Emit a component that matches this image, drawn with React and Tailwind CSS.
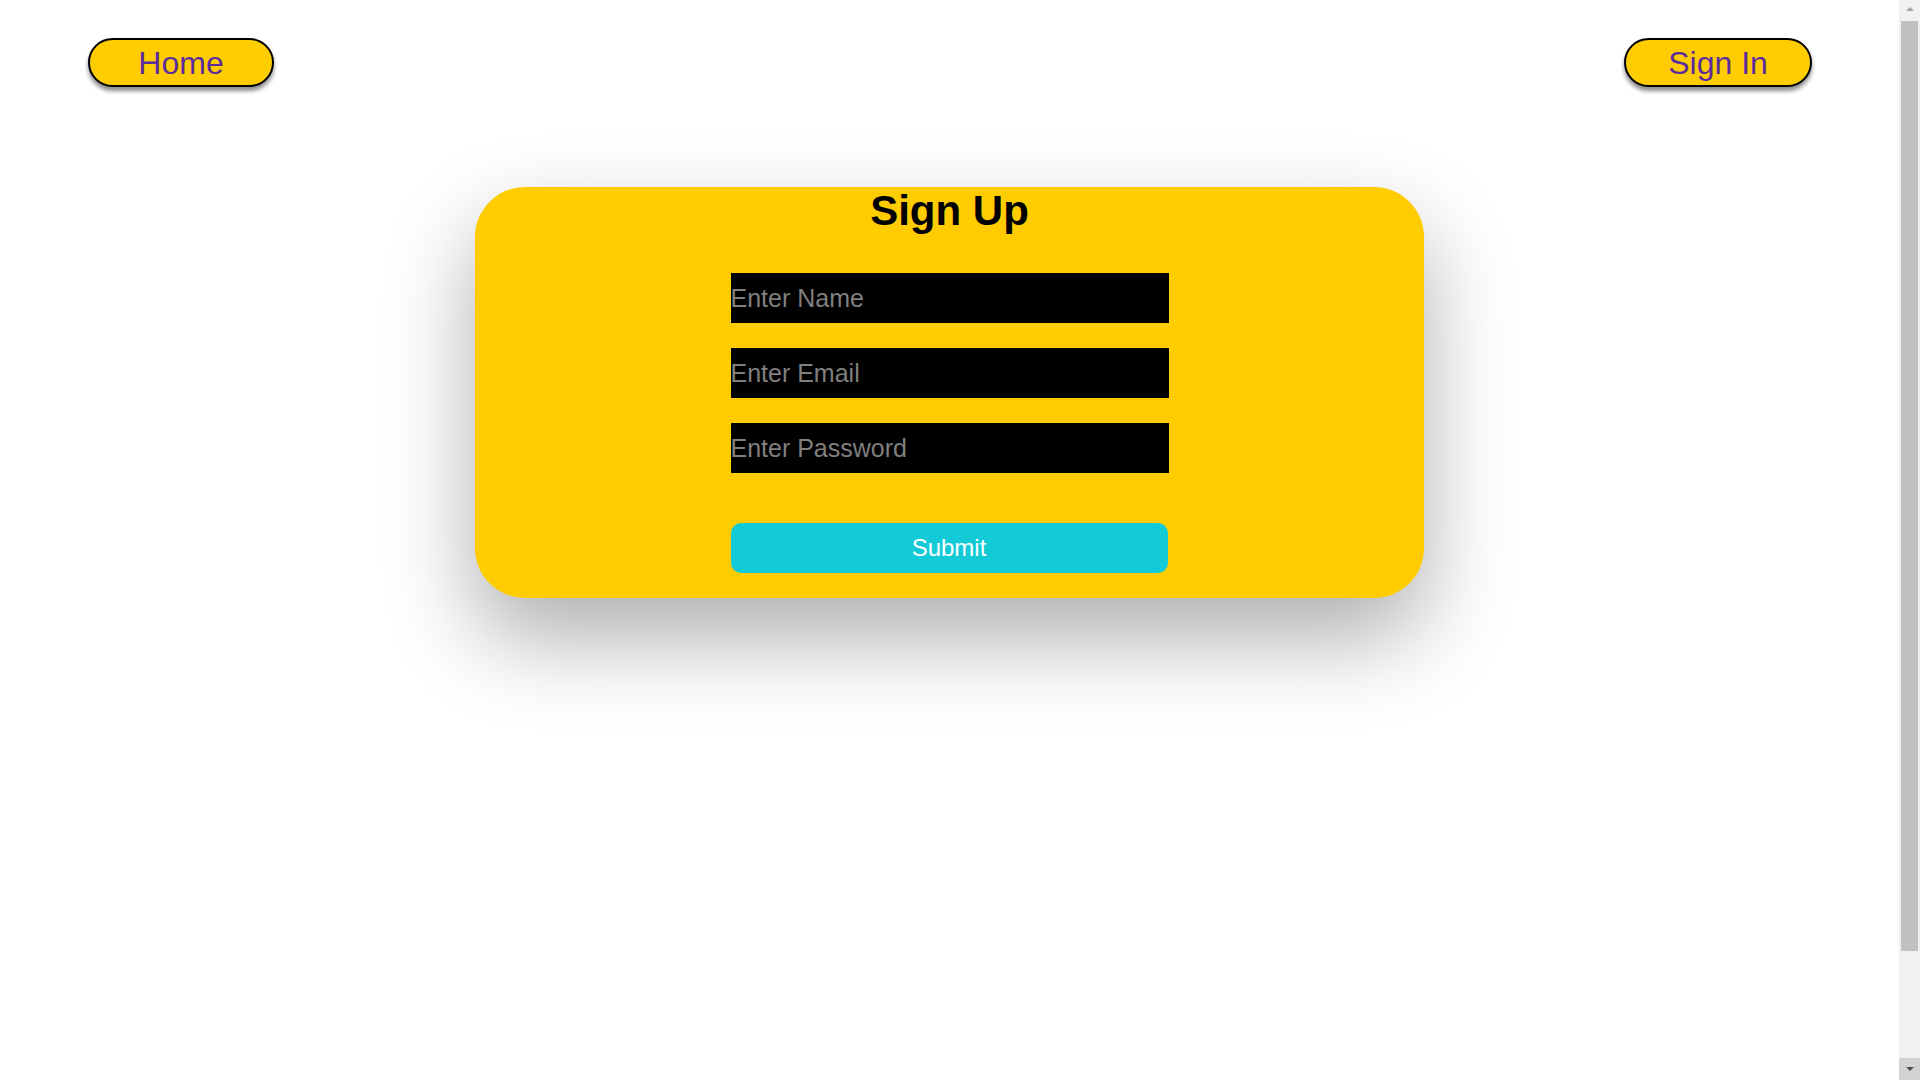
import React from 'react';

const Scrollbar = () => (
    <div className="w-[21px] h-full bg-[#f1f1f1] flex flex-col shrink-0">
        <div className="h-[17px] flex items-center justify-center">
            <div className="w-0 h-0 border-l-[4px] border-r-[4px] border-b-[4px] border-l-transparent border-r-transparent border-b-[#a3a3a3]" />
        </div>
        <div className="mt-[4px] ml-[2px] mr-[2px] h-[930px] bg-[#c1c1c1]" />
        <div className="flex-1" />
        <div className="h-[22px] bg-[#d2d2d2] flex items-center justify-center">
            <div className="w-0 h-0 border-l-[4px] border-r-[4px] border-t-[4px] border-l-transparent border-r-transparent border-t-[#505050]" />
        </div>
    </div>
);

const App = () => {
    return (
        <div className="h-screen flex overflow-hidden bg-white font-['Liberation_Sans',Arial,sans-serif]">
            <div className="flex-1">
                {/* Top navigation */}
                <div className="flex items-start justify-between pl-[88px] pr-[87px] pt-[38px]">
                    <button className="w-[186px] h-[49px] rounded-full border-2 border-black bg-[#ffcc00] text-[32px] leading-none text-[#5b2c9b] shadow-[0_4px_4px_rgba(0,0,0,0.45)]">
                        Home
                    </button>
                    <button className="w-[188px] h-[49px] rounded-full border-2 border-black bg-[#ffcc00] text-[32px] leading-none text-[#5b2c9b] shadow-[0_4px_4px_rgba(0,0,0,0.45)]">
                        Sign In
                    </button>
                </div>

                {/* Sign up card */}
                <div className="flex justify-center pt-[100px]">
                    <div className="w-[949px] h-[411px] rounded-[50px] bg-[#ffcc00] shadow-[0_40px_90px_rgba(0,0,0,0.32)] flex flex-col items-center pt-[3px]">
                        <h1 className="text-[42px] leading-none font-bold text-black">Sign Up</h1>
                        <form className="flex flex-col gap-[25px] mt-[41px]" onSubmit={(e) => e.preventDefault()}>
                            <input
                                type="text"
                                placeholder="Enter Name"
                                className="w-[438px] h-[50px] bg-black text-white text-[25px] outline-none placeholder:text-[#7f7f7f]"
                            />
                            <input
                                type="email"
                                placeholder="Enter Email"
                                className="w-[438px] h-[50px] bg-black text-white text-[25px] outline-none placeholder:text-[#7f7f7f]"
                            />
                            <input
                                type="password"
                                placeholder="Enter Password"
                                className="w-[438px] h-[50px] bg-black text-white text-[25px] outline-none placeholder:text-[#7f7f7f]"
                            />
                            <button
                                type="submit"
                                className="mt-[25px] w-[437px] h-[50px] rounded-[10px] bg-[#12cbd6] text-white text-[24px]"
                            >
                                Submit
                            </button>
                        </form>
                    </div>
                </div>
            </div>
            <Scrollbar />
        </div>
    );
};

export default App;
